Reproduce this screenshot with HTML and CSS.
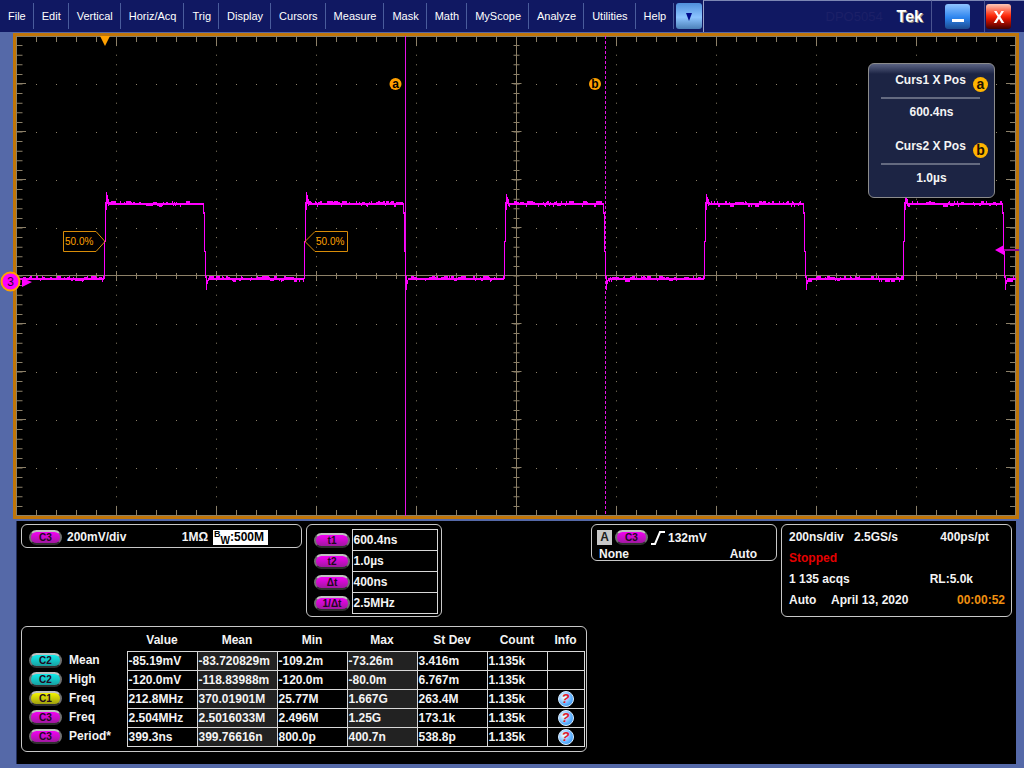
FILE: index.html
```html
<!DOCTYPE html>
<html lang="en">
<head>
  <meta charset="UTF-8">
  <meta name="viewport" content="width=device-width, initial-scale=1.0">
  <title>Tek DPO5054</title>
  <link rel="stylesheet" href="styles.css">
</head>
<body>
  <header class="topbar">
    <nav class="menu">
      <button class="menu-item">File</button>
      <button class="menu-item">Edit</button>
      <button class="menu-item">Vertical</button>
      <button class="menu-item">Horiz/Acq</button>
      <button class="menu-item">Trig</button>
      <button class="menu-item">Display</button>
      <button class="menu-item">Cursors</button>
      <button class="menu-item">Measure</button>
      <button class="menu-item">Mask</button>
      <button class="menu-item">Math</button>
      <button class="menu-item">MyScope</button>
      <button class="menu-item">Analyze</button>
      <button class="menu-item">Utilities</button>
      <button class="menu-item">Help</button>
    </nav>
    <button class="more" aria-label="More">
      <svg width="8" height="8" viewBox="0 0 8 8"><path d="M1 0h6L4 8z" fill="#000a8c"/></svg>
    </button>
    <div class="brand">
      <span class="model">DPO5054</span>
      <span class="tek">Tek</span>
    </div>
    <div class="win-cell"><button class="win-btn minimize" aria-label="Minimize">
      <svg width="12" height="3" viewBox="0 0 12 3"><path d="M0 0h12v3H0z" fill="#fff"/></svg>
    </button></div>
    <div class="win-cell last"><button class="win-btn close" aria-label="Close">
      <svg width="12" height="12" viewBox="0 0 12 12"><path d="M1 0h2.6L6 4 8.400 0H11L7.400 5.800 11.300 12H8.600L6 7.700 3.400 12H.7l3.900-6.200z" fill="#fff"/></svg>
    </button></div>
  </header>

  <main class="scope">
    <svg class="screen" viewBox="16 36 1000 480">
      <!-- dotted grid, 10 x 10 divisions -->
      <g id="dots" class="dots"></g>
      <g id="ticks" class="ticks"></g>

      <!-- cursors -->
      <path class="cursor" d="M405.500 36V516"/>
      <path class="cursor" stroke-dasharray="3 2" d="M605.500 36V516"/>
      <g class="cursor-tag">
        <circle cx="395.500" cy="84" r="6"/>
        <text x="395.500" y="88">a</text>
        <circle cx="595" cy="84" r="6"/>
        <text x="595" y="88">b</text>
      </g>

      <path id="trace" class="trace"/>

      <!-- trigger position -->
      <path d="M100 36h10l-5 10z" fill="#ffa000"/>

      <!-- 50% reference tags -->
      <g class="ref-tag">
        <path d="M63.500 231.500H96L105 241.500L96 251.500H63.500z"/>
        <text x="65" y="245">50.0%</text>
        <path d="M347.500 231.500H315L305 241.500L315 251.500H347.500z"/>
        <text x="316" y="245">50.0%</text>
      </g>

      <!-- trigger level -->
      <path d="M1003 250H1019" stroke="#8c0a8c" stroke-width="2"/>
      <path d="M995 250l9-5v10z" fill="#ff00ff"/>

      <!-- channel 3 ground -->
      <path d="M22 278l10 4-10 5z" fill="#ff00ff"/>
      <circle cx="10.500" cy="281.500" r="9" fill="#ff00ff" stroke="#ffa000" stroke-width="2"/>
      <text class="channel" x="10.500" y="286">3</text>
    </svg>

    <section class="readout">
      <h2 class="readout-title">Curs1 X Pos <span class="knob">a</span></h2>
      <p class="readout-value">600.4ns</p>
      <h2 class="readout-title">Curs2 X Pos <span class="knob">b</span></h2>
      <p class="readout-value">1.0µs</p>
    </section>
  </main>

  <footer class="status">
    <div class="status-row">
      <section class="panel vertical">
        <span class="pill c3">C3</span>
        <span class="scale">200mV/div</span>
        <span class="term">1MΩ</span>
        <span class="bandwidth"><span class="bw-b">B</span><span class="bw-w">W</span>:500M</span>
      </section>

      <section class="panel cursors">
        <table class="cursor-table">
          <tr><th><span class="pill wide c3">t1</span></th><td>600.4ns</td></tr>
          <tr><th><span class="pill wide c3">t2</span></th><td>1.0µs</td></tr>
          <tr><th><span class="pill wide c3">Δt</span></th><td>400ns</td></tr>
          <tr><th><span class="pill wide c3">1/Δt</span></th><td>2.5MHz</td></tr>
        </table>
      </section>

      <section class="panel trigger">
        <div class="trigger-row">
          <span class="event">A</span>
          <span class="pill c3">C3</span>
          <svg width="14" height="14" viewBox="0 0 14 14"><path d="M0 13h4L9 1h5" fill="none" stroke="#fff" stroke-width="2"/></svg>
          <span>132mV</span>
        </div>
        <div class="trigger-row modes">
          <span>None</span>
          <span>Auto</span>
        </div>
      </section>

      <section class="panel horizontal">
        <div class="line"><span class="rate">200ns/div</span><span>2.5GS/s</span><span class="right near">400ps/pt</span></div>
        <div class="line stopped">Stopped</div>
        <div class="line"><span>1 135 acqs</span><span class="right far">RL:5.0k</span></div>
        <div class="line"><span class="mode">Auto</span><span>April 13, 2020</span><span class="right time">00:00:52</span></div>
      </section>
    </div>

    <section class="panel measure">
      <table class="measure-table">
        <colgroup>
          <col class="col-name"><col class="col-num"><col class="col-mean"><col class="col-num"><col class="col-num"><col class="col-num"><col class="col-count"><col class="col-info">
        </colgroup>
        <thead>
          <tr><td></td><th>Value</th><th>Mean</th><th>Min</th><th>Max</th><th>St Dev</th><th>Count</th><th>Info</th></tr>
        </thead>
        <tbody>
          <tr>
            <th><span class="pill c2">C2</span>Mean</th>
            <td>-85.19mV</td><td class="shade">-83.720829m</td><td>-109.2m</td><td class="shade">-73.26m</td><td>3.416m</td><td>1.135k</td><td></td>
          </tr>
          <tr>
            <th><span class="pill c2">C2</span>High</th>
            <td>-120.0mV</td><td class="shade">-118.83988m</td><td>-120.0m</td><td class="shade">-80.0m</td><td>6.767m</td><td>1.135k</td><td></td>
          </tr>
          <tr>
            <th><span class="pill c1">C1</span>Freq</th>
            <td>212.8MHz</td><td class="shade">370.01901M</td><td>25.77M</td><td class="shade">1.667G</td><td>263.4M</td><td>1.135k</td>
            <td class="info"><button class="info-btn">?</button></td>
          </tr>
          <tr>
            <th><span class="pill c3">C3</span>Freq</th>
            <td>2.504MHz</td><td class="shade">2.5016033M</td><td>2.496M</td><td class="shade">1.25G</td><td>173.1k</td><td>1.135k</td>
            <td class="info"><button class="info-btn">?</button></td>
          </tr>
          <tr>
            <th><span class="pill c3">C3</span>Period*</th>
            <td>399.3ns</td><td class="shade">399.76616n</td><td>800.0p</td><td class="shade">400.7n</td><td>538.8p</td><td>1.135k</td>
            <td class="info"><button class="info-btn">?</button></td>
          </tr>
        </tbody>
      </table>
    </section>
  </footer>
  <script src="scope.js"></script>
</body>
</html>
```

FILE: styles.css
```css
* {
  box-sizing: border-box;
}

body {
  margin: 0;
  min-height: 100vh;
  display: flex;
  flex-direction: column;
  background: #5569a8;
  color: #f4f4f4;
  font-family: "Liberation Sans", Arial, sans-serif;
  font-size: 12px;
}

button {
  font-family: inherit;
  cursor: pointer;
}

/* menu bar */
.topbar {
  display: flex;
  height: 32px;
  background: #101862;
}

.menu {
  display: flex;
  align-items: center;
}

.menu-item {
  height: 26px;
  padding: 0 7px 0 8px;
  border: 0;
  border-right: 1px solid #4a5c9c;
  background: none;
  color: #fff;
  font-size: 11px;
}

.more {
  width: 26px;
  height: 26px;
  margin: 3px 1px 0 2px;
  padding: 0;
  border: 0;
  border-radius: 3px;
  background: linear-gradient(#4f8fdc, #8cc4ff 55%, #4c80b8);
}

.brand {
  flex: 1;
  display: flex;
  justify-content: flex-end;
  align-items: center;
  gap: 14px;
  padding-right: 8px;
  border-left: 1px solid #9aa2c8;
  border-top: 1px solid #7c86b4;
}

.model {
  color: #1c2068;
  font-size: 13px;
}

.tek {
  font-size: 16px;
  font-weight: bold;
  color: #fff;
  text-shadow: 1px 1px 0 #8c8878;
}

.win-cell {
  width: 53px;
  padding: 3px 0 0 13px;
  border-left: 1px solid #4a5490;
  border-top: 1px solid #7c86b4;
}

.win-cell.last {
  width: 40px;
  padding-left: 1px;
}

.win-btn {
  display: flex;
  justify-content: center;
  align-items: center;
  width: 25px;
  height: 25px;
  padding: 0;
  border: 0;
  border-radius: 3px;
}

.minimize {
  align-items: flex-end;
  padding-bottom: 7px;
  background: linear-gradient(#90c4ff, #2c84ee 55%, #1c4c90);
}

.close {
  background: linear-gradient(#ffc8b8, #ff3010 45%, #dc1400 60%, #400000);
}

/* waveform display */
.scope {
  position: relative;
  margin: 1px 5px 2px 13px;
  border: 3px solid #c07508;
  background: #000;
}

.screen {
  display: block;
  width: 100%;
  overflow: visible;
}

.ticks {
  stroke: #8c8068;
}

.dots {
  stroke: #8c8068;
}

.trace {
  fill: none;
  stroke: #ff00ff;
  stroke-width: 1;
  shape-rendering: crispEdges;
}

.cursor {
  stroke: #e612e6;
}

.cursor-tag {
  fill: #ffa000;
}

.cursor-tag text {
  fill: #000;
  font-size: 12px;
  font-weight: bold;
  text-anchor: middle;
}

.ref-tag path {
  fill: none;
  stroke: #d88c08;
}

.ref-tag text {
  fill: #ffa000;
  font-size: 10px;
}

.channel {
  fill: #300030;
  font-size: 12px;
  text-anchor: middle;
}

.readout {
  position: absolute;
  top: 27px;
  right: 21px;
  width: 127px;
  padding-top: 7px;
  border: 1px solid #8c8c8c;
  border-radius: 6px;
  background: linear-gradient(#5c6484, #1c2444 10px);
  font-weight: bold;
  text-align: center;
}

.readout-title {
  position: relative;
  margin: 0 14px 0 12px;
  height: 28px;
  border-bottom: 2px solid #646a80;
  font-size: 12px;
  line-height: 18px;
}

.knob {
  position: absolute;
  top: 6px;
  right: -8px;
  width: 15px;
  height: 15px;
  border-radius: 50%;
  background: #ffb400;
  color: #201000;
  font-size: 14px;
  line-height: 14px;
}

.readout-value {
  margin: 0;
  height: 38px;
  line-height: 26px;
}

.readout-value:last-child {
  height: 32px;
}

/* status area */
.status {
  flex: 1;
  margin: 0 8px 4px 16px;
  padding: 3px 4px 12px;
  border-left: 1px solid #24305c;
  background: #000;
  font-weight: bold;
}

.status-row {
  display: flex;
  align-items: flex-start;
  gap: 4px;
  margin-bottom: 9px;
}

.panel {
  border: 1px solid #c8c8c8;
  border-radius: 6px;
}

.pill {
  display: inline-block;
  width: 33px;
  height: 15px;
  border: 2px solid #707070;
  border-top-color: #c0c0c0;
  border-bottom-color: #303030;
  border-radius: 8px;
  color: #200820;
  font-size: 10px;
  line-height: 12px;
  text-align: center;
}

.pill.wide {
  width: 36px;
}

.c1 {
  background: linear-gradient(#f4f400, #a0a010);
}

.c2 {
  background: linear-gradient(#10ecec, #18a0a0);
}

.c3 {
  background: linear-gradient(#f400f4, #a018a0);
}

.vertical {
  display: flex;
  align-items: center;
  width: 281px;
  height: 24px;
  padding: 2px 33px 0 7px;
}

.scale {
  margin-left: 5px;
}

.term {
  margin-left: auto;
}

.bandwidth {
  display: flex;
  align-items: center;
  height: 15px;
  margin-left: 5px;
  padding: 0 4px 0 1px;
  background: #fff;
  color: #000;
}

.bw-b {
  align-self: flex-start;
  font-size: 9px;
  line-height: 9px;
}

.bw-w {
  align-self: flex-end;
  font-size: 10px;
  line-height: 9px;
}

.cursors {
  width: 136px;
  padding: 4px 3px 2px 7px;
}

.cursor-table {
  width: 100%;
  border-collapse: collapse;
}

.cursor-table th {
  width: 38px;
  height: 21px;
  padding: 0;
  text-align: left;
  line-height: 0;
  vertical-align: middle;
}

.cursor-table td {
  padding: 0 1px;
  border: 1px solid #d8d8d8;
}

.trigger {
  width: 186px;
  height: 37px;
  margin-left: auto;
  padding: 5px 19px 0 5px;
}

.trigger-row {
  display: flex;
  align-items: center;
  gap: 3px;
  height: 15px;
}

.modes {
  justify-content: space-between;
  padding-left: 2px;
  height: 18px;
}

.event {
  width: 15px;
  height: 15px;
  background: #c8c8c8;
  color: #202020;
  line-height: 15px;
  text-align: center;
}

.horizontal {
  width: 231px;
  height: 93px;
  padding: 2px 6px 0 7px;
}

.line {
  display: flex;
  height: 21px;
  line-height: 21px;
}

.rate {
  width: 65px;
}

.mode {
  width: 42px;
}

.right {
  margin-left: auto;
}

.near {
  padding-right: 16px;
}

.far {
  padding-right: 32px;
}

.stopped {
  color: #e60000;
}

.time {
  color: #f09010;
}

/* measurements */
.measure {
  width: 566px;
  padding: 0 2px 4px 0;
}

.measure-table {
  width: 100%;
  table-layout: fixed;
  border-collapse: collapse;
}

.col-name {
  width: 105px;
}

.col-num {
  width: 70px;
}

.col-mean {
  width: 80px;
}

.col-count {
  width: 60px;
}

.col-info {
  width: 37px;
}

.measure-table thead th {
  height: 24px;
  padding: 3px 0 0;
}

.measure-table tbody th {
  height: 19px;
  padding: 0 0 0 7px;
  text-align: left;
}

.measure-table tbody .pill {
  margin-right: 7px;
  vertical-align: top;
}

.measure-table tbody td {
  padding: 0 1px;
  border: 1px solid #d8d8d8;
}

.measure-table .shade {
  background: #222;
}

.measure-table .info {
  text-align: center;
  line-height: 0;
}

.info-btn {
  width: 16px;
  height: 16px;
  padding: 0;
  border: 1px solid #d8ecff;
  border-radius: 50%;
  background: radial-gradient(circle at 35% 35%, #fff, #5cb0ff 60%, #2c80dc);
  color: #e01828;
  font-size: 13px;
  font-weight: bold;
  font-style: italic;
  line-height: 13px;
}
```

FILE: scope.js
```javascript
const SVG = "http://www.w3.org/2000/svg";

// dashed line: thin dashes across a thick stroke give the tick marks
function dashed(group, d, width, dash) {
  const path = document.createElementNS(SVG, "path");
  path.setAttribute("d", d);
  path.setAttribute("stroke-width", width);
  if (dash) path.setAttribute("stroke-dasharray", dash);
  group.appendChild(path);
}

const dots = document.getElementById("dots");
const ticks = document.getElementById("ticks");

for (let i = 1; i < 10; i++) {
  if (i === 5) continue;
  dashed(dots, `M${16.5 + i * 100} 45.1V506`, 1, "1 8.6");
  dashed(dots, `M36 ${36.5 + i * 48}H1006`, 1, "1 19");
}

// frame and centre axes
dashed(ticks, "M16.5 36V516M1015.5 36V516M16 36.5H1016M16 515.5H1016", 1);
dashed(ticks, "M516.5 36V516M16 275.5H1016", 1);

// minor ticks
dashed(ticks, "M36 39H1016", 6, "1 19");
dashed(ticks, "M36 513H1016", 6, "1 19");
dashed(ticks, "M36 276H1016", 6, "1 19");
dashed(ticks, "M19.5 45.1V516", 6, "1 8.6");
dashed(ticks, "M516.5 45.1V516", 6, "1 8.6");
dashed(ticks, "M1013 45.1V516", 6, "1 8.6");

// major ticks
dashed(ticks, "M116 41H1016", 10, "1 99");
dashed(ticks, "M116 511H1016", 10, "1 99");
dashed(ticks, "M116 276H1016", 10, "1 99");
dashed(ticks, "M21 83V516", 10, "1 47");
dashed(ticks, "M516.5 83V516", 10, "1 47");
dashed(ticks, "M1011 83V516", 10, "1 47");

// square wave with overshoot and a little noise
let seed = 7;
function noise() {
  seed = (seed * 16807) % 2147483647;
  return seed / 2147483647;
}

function level(from, to, y) {
  let d = "";
  let n = 0;
  for (let x = from; x < to; x++) {
    // each noise value lasts one or two columns
    if (noise() < 0.6) n = noise();
    let top = y - 1;
    let bottom = y + 1;
    if (n > 0.6) top = y - 2;
    if (n > 0.8) top = y - 3;
    if (n < 0.16) bottom = y + 2;
    if (n < 0.07) bottom = y + 3;
    d += `M${x + 0.5} ${top}V${bottom}`;
  }
  return d;
}

let d = level(17, 104, 279);
for (const x of [104, 304, 504, 704, 903]) {
  const peak = x < 500 ? 192 : 194;
  d += `M${x + 0.5} 279V241M${x + 1.5} 242V202M${x + 2.5} ${peak}V210M${x + 3.5} ${peak + 3}V204M${x + 4.5} 199V206`;
  d += level(x + 5, x + 99, 204);
  d += `M${x + 99.5} 203V214M${x + 100.5} 212V252M${x + 101.5} 251V278M${x + 102.5} 276V290M${x + 103.5} 280V284`;
  d += level(x + 104, Math.min(x + 200, 1016), 279);
}
document.getElementById("trace").setAttribute("d", d);
```
